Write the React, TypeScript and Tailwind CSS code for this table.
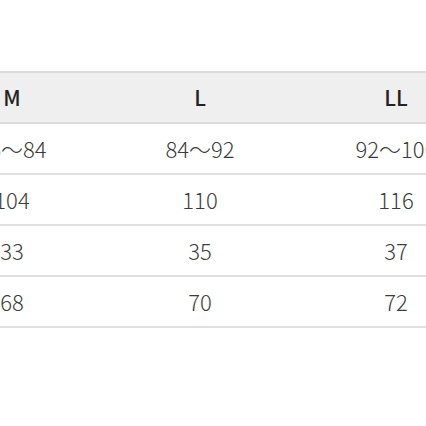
import React from "react";

const rows = [
  ["76〜84", "84〜92", "92〜100"],
  ["104", "110", "116"],
  ["33", "35", "37"],
  ["68", "70", "72"],
];

const font = { fontFamily: '"Noto Sans CJK JP", "Noto Sans", sans-serif' };

export default function App() {
  return (
    <div className="w-[426px] h-[426px] bg-white overflow-hidden" style={font}>
      <div className="pt-[71px] ml-[-78px] w-[572px]">
        <div className="flex h-[53px] items-center bg-[#efefef] border-y-2 border-[#dcdcdc] text-[21px] font-medium text-[#222]">
          <div className="w-[180px] text-center">M</div>
          <div className="w-[196px] text-center">L</div>
          <div className="w-[196px] text-center">LL</div>
        </div>
        {rows.map((r, i) => (
          <div
            key={i}
            className="flex h-[51px] items-center border-b-2 border-[#e0e0e0] text-[22px] font-light text-[#3c3c3c]"
          >
            <div className="w-[180px] text-center">{r[0]}</div>
            <div className="w-[196px] text-center">{r[1]}</div>
            <div className="w-[196px] text-center">{r[2]}</div>
          </div>
        ))}
      </div>
    </div>
  );
}
